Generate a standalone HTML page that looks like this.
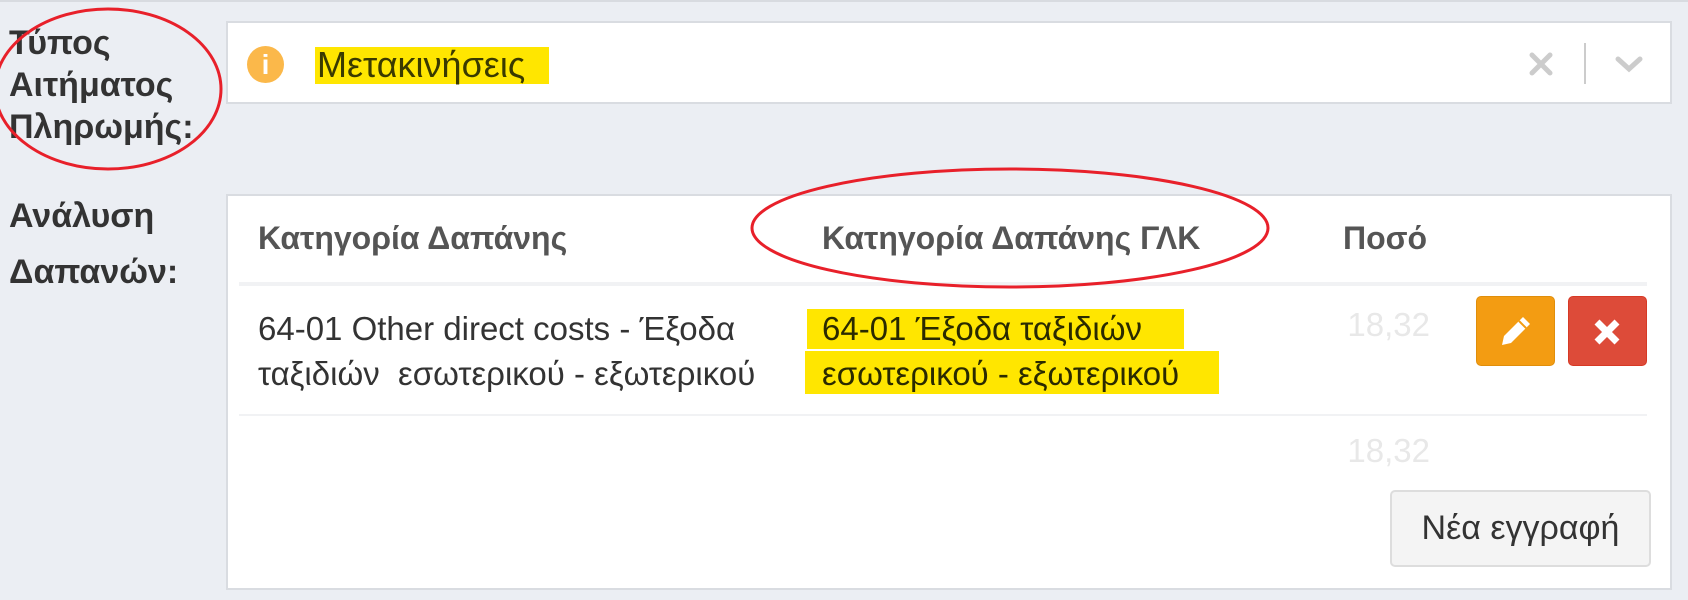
<!DOCTYPE html>
<html><head><meta charset="utf-8">
<style>
*{box-sizing:border-box;margin:0;padding:0}
body{width:1688px;height:598px;background:#ebeef3;font-family:"Liberation Sans","DejaVu Sans",sans-serif;position:relative;overflow:hidden;border-top:2px solid #d8dbe0}
.a{position:absolute;white-space:nowrap}
.lbl{font-weight:bold;font-size:34px;color:#333}
.box{position:absolute;background:#fff;border:2px solid #d9dce1}
.hd{font-weight:bold;font-size:32px;color:#555}
.tx{font-size:33px;color:#333}
.hl{background:#ffe600}
.btn{position:absolute;border-radius:5px}
</style></head><body>
<div class="a lbl" style="left:9px;top:20px;line-height:42px">Τύπος<br>Αιτήματος<br>Πληρωμής:</div>
<div class="a lbl" style="left:9px;top:186px;line-height:56px">Ανάλυση<br>Δαπανών:</div>

<div class="box" style="left:226px;top:19px;width:1446px;height:83px"></div>
<div class="a" style="left:247px;top:44px;width:37px;height:37px;border-radius:50%;background:#fbb84a;color:#fff;font-weight:bold;font-size:28px;text-align:center;line-height:37px">i</div>
<div class="a hl" style="left:315px;top:45px;width:234px;height:37px"></div>
<div class="a" style="left:317px;top:41px;font-size:36px;color:#3a3a00;line-height:44px">Μετακινήσεις</div>
<svg class="a" style="left:1528px;top:49px" width="26" height="26"><path d="M4 4L22 22M22 4L4 22" stroke="#ccc" stroke-width="5" stroke-linecap="round"/></svg>
<div class="a" style="left:1584px;top:41px;width:2px;height:41px;background:#ccc"></div>
<svg class="a" style="left:1614px;top:52px" width="30" height="20"><path d="M4 5L15 15L26 5" stroke="#ccc" stroke-width="5" fill="none" stroke-linecap="round"/></svg>

<div class="box" style="left:226px;top:192px;width:1446px;height:396px"></div>
<div class="a hd" style="left:258px;top:218px">Κατηγορία Δαπάνης</div>
<div class="a hd" style="left:822px;top:218px">Κατηγορία Δαπάνης ΓΛΚ</div>
<div class="a hd" style="left:1343px;top:218px">Ποσό</div>
<div class="a" style="left:239px;top:280px;width:1408px;height:4px;background:#f1f2f4"></div>
<div class="a hl" style="left:807px;top:307px;width:377px;height:40px"></div>
<div class="a hl" style="left:805px;top:349px;width:414px;height:43px"></div>
<div class="a tx" style="left:258px;top:304px;line-height:45px">64-01 Other direct costs - Έξοδα<br>ταξιδιών&nbsp; εσωτερικού - εξωτερικού</div>
<div class="a tx" style="left:822px;top:304px;line-height:45px;color:#2a2a00">64-01 Έξοδα ταξιδιών<br>εσωτερικού - εξωτερικού</div>
<div class="a" style="left:1300px;top:304px;width:130px;text-align:right;font-size:33px;color:#e8e8e8">18,32</div>
<div class="btn" style="left:1476px;top:294px;width:79px;height:70px;background:#f39c12;border:1px solid #e08e0b"></div>
<svg class="a" style="left:1499px;top:312px" width="34" height="34"><path d="M24 3L31 10L12 29L3 31L5 22Z" fill="#fff"/><path d="M20 7L27 14" stroke="#f39c12" stroke-width="2"/></svg>
<div class="btn" style="left:1568px;top:294px;width:79px;height:70px;background:#dd4b39;border:1px solid #d73925"></div>
<svg class="a" style="left:1592px;top:315px" width="30" height="30"><path d="M5 5L25 25M25 5L5 25" stroke="#fff" stroke-width="7"/></svg>
<div class="a" style="left:239px;top:412px;width:1408px;height:2px;background:#f1f2f4"></div>
<div class="a" style="left:1300px;top:430px;width:130px;text-align:right;font-size:33px;color:#e8e8e8">18,32</div>
<div class="btn" style="left:1390px;top:488px;width:261px;height:77px;background:#f4f4f4;border:2px solid #ddd;font-size:34px;color:#333;text-align:center;line-height:73px">Νέα εγγραφή</div>

<svg class="a" style="left:0;top:0" width="1688" height="598">
<ellipse cx="108" cy="87" rx="113" ry="80" fill="none" stroke="#e8202a" stroke-width="3"/>
<ellipse cx="1010" cy="226" rx="258" ry="59" fill="none" stroke="#e8202a" stroke-width="3"/>
</svg>
</body></html>
